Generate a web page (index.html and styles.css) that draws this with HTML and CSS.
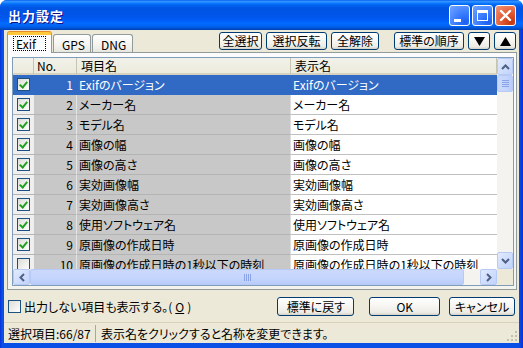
FILE: index.html
```html
<!DOCTYPE html>
<html>
    <head>
        <meta charset="utf-8">
        <link rel="stylesheet" href="styles.css">
    </head>
    <body>
        <div class="window">
            <div class="titlebar">
                <span class="title">出力設定</span>
                <div class="caption-buttons">
                    <span class="cap min"><i></i></span>
                    <span class="cap max"><i></i></span>
                    <span class="cap close">
                        <svg width="13" height="13" viewBox="0 0 13 13"><path d="M2 2 L11 11 M11 2 L2 11" stroke="#fff" stroke-width="2.4" stroke-linecap="round"/></svg>
                    </span>
                </div>
            </div>

            <div class="client">
                <div class="toprow">
                    <div class="tabs">
                        <span class="tab active"><span class="focus">Exif</span></span>
                        <span class="tab">GPS</span>
                        <span class="tab">DNG</span>
                    </div>
                    <div class="tools">
                        <button class="btn w43">全選択</button>
                        <button class="btn w61">選択反転</button>
                        <button class="btn w48">全解除</button>
                        <button class="btn w70 gap">標準の順序</button>
                        <button class="btn w22"><svg width="11" height="9" viewBox="0 0 11 9"><path d="M0 0 H11 L5.5 9 Z" fill="#000"/></svg></button>
                        <button class="btn w22"><svg width="11" height="9" viewBox="0 0 11 9"><path d="M0 9 H11 L5.5 0 Z" fill="#000"/></svg></button>
                    </div>
                </div>

                <div class="panel">
                    <div class="list">
                        <div class="list-main">
                            <div class="grid">
                                <div class="row head">
                                    <span class="c-check"></span>
                                    <span class="c-no">No.</span>
                                    <span class="c-item">項目名</span>
                                    <span class="c-name">表示名</span>
                                </div>
                                <div class="row selected">
                                    <span class="c-check"><i class="cb on"></i></span>
                                    <span class="c-no">1</span>
                                    <span class="c-item">Exifのバージョン</span>
                                    <span class="c-name">Exifのバージョン</span>
                                </div>
                                <div class="row">
                                    <span class="c-check"><i class="cb on"></i></span>
                                    <span class="c-no">2</span>
                                    <span class="c-item">メーカー名</span>
                                    <span class="c-name">メーカー名</span>
                                </div>
                                <div class="row">
                                    <span class="c-check"><i class="cb on"></i></span>
                                    <span class="c-no">3</span>
                                    <span class="c-item">モデル名</span>
                                    <span class="c-name">モデル名</span>
                                </div>
                                <div class="row">
                                    <span class="c-check"><i class="cb on"></i></span>
                                    <span class="c-no">4</span>
                                    <span class="c-item">画像の幅</span>
                                    <span class="c-name">画像の幅</span>
                                </div>
                                <div class="row">
                                    <span class="c-check"><i class="cb on"></i></span>
                                    <span class="c-no">5</span>
                                    <span class="c-item">画像の高さ</span>
                                    <span class="c-name">画像の高さ</span>
                                </div>
                                <div class="row">
                                    <span class="c-check"><i class="cb on"></i></span>
                                    <span class="c-no">6</span>
                                    <span class="c-item">実効画像幅</span>
                                    <span class="c-name">実効画像幅</span>
                                </div>
                                <div class="row">
                                    <span class="c-check"><i class="cb on"></i></span>
                                    <span class="c-no">7</span>
                                    <span class="c-item">実効画像高さ</span>
                                    <span class="c-name">実効画像高さ</span>
                                </div>
                                <div class="row">
                                    <span class="c-check"><i class="cb on"></i></span>
                                    <span class="c-no">8</span>
                                    <span class="c-item">使用ソフトウェア名</span>
                                    <span class="c-name">使用ソフトウェア名</span>
                                </div>
                                <div class="row">
                                    <span class="c-check"><i class="cb on"></i></span>
                                    <span class="c-no">9</span>
                                    <span class="c-item">原画像の作成日時</span>
                                    <span class="c-name">原画像の作成日時</span>
                                </div>
                                <div class="row">
                                    <span class="c-check"><i class="cb"></i></span>
                                    <span class="c-no">10</span>
                                    <span class="c-item">原画像の作成日時の1秒以下の時刻</span>
                                    <span class="c-name">原画像の作成日時の1秒以下の時刻</span>
                                </div>
                            </div>
                            <div class="vscroll">
                                <span class="sb-btn"><svg width="9" height="6" viewBox="0 0 9 6"><path d="M1 5 L4.5 1.5 L8 5" fill="none" stroke="#4d6185" stroke-width="2"/></svg></span>
                                <span class="sb-thumb v"><i></i><i></i><i></i><i></i></span>
                                <span class="sb-track"></span>
                                <span class="sb-btn"><svg width="9" height="6" viewBox="0 0 9 6"><path d="M1 1 L4.5 4.5 L8 1" fill="none" stroke="#4d6185" stroke-width="2"/></svg></span>
                            </div>
                        </div>
                        <div class="hscroll-row">
                            <div class="hscroll">
                                <span class="sb-btn"><svg width="6" height="9" viewBox="0 0 6 9"><path d="M5 1 L1.5 4.5 L5 8" fill="none" stroke="#4d6185" stroke-width="2"/></svg></span>
                                <span class="sb-thumb h"><i></i><i></i><i></i><i></i></span>
                                <span class="sb-track"></span>
                                <span class="sb-btn"><svg width="6" height="9" viewBox="0 0 6 9"><path d="M1 1 L4.5 4.5 L1 8" fill="none" stroke="#4d6185" stroke-width="2"/></svg></span>
                            </div>
                            <div class="corner"></div>
                        </div>
                    </div>
                </div>

                <div class="footer">
                    <label class="show-all"><i class="cb"></i>出力しない項目も表示する。(<u>O</u>)</label>
                    <button class="btn w77">標準に戻す</button>
                    <button class="btn w71 ok">OK</button>
                    <button class="btn w66">キャンセル</button>
                </div>

                <div class="status">
                    <span class="status-count">選択項目:66/87</span>
                    <span class="status-msg">表示名をクリックすると名称を変更できます。</span>
                    <svg class="grip" width="12" height="12" viewBox="0 0 12 12">
                        <rect x="9" y="1" width="2" height="2" fill="#c3bfaf"/>
                        <rect x="5" y="5" width="2" height="2" fill="#c3bfaf"/>
                        <rect x="9" y="5" width="2" height="2" fill="#c3bfaf"/>
                        <rect x="1" y="9" width="2" height="2" fill="#c3bfaf"/>
                        <rect x="5" y="9" width="2" height="2" fill="#c3bfaf"/>
                        <rect x="9" y="9" width="2" height="2" fill="#c3bfaf"/>
                    </svg>
                </div>
            </div>
        </div>
    </body>
</html>
```

FILE: styles.css
```css
/* BASE */
* {
    box-sizing: border-box;
}
body {
    margin: 0;
    font-family: "Noto Sans CJK JP", "Liberation Sans", sans-serif;
    font-size: 12px;
    font-feature-settings: "palt";
    color: #000;
}

/* WINDOW FRAME */
.window {
    width: 523px;
    height: 348px;
    display: flex;
    flex-flow: column;
    background: linear-gradient(to right, #0831d9, #0a4fe6 2px, #0a4fe6 519px, #0831d9);
    border-radius: 7px 7px 0 0;
    overflow: hidden;
}
.titlebar {
    height: 30px;
    flex: 0 0 30px;
    display: flex;
    align-items: center;
    justify-content: space-between;
    padding: 0 7px 0 8px;
    background: linear-gradient(to bottom, #0058ee 0%, #3593ff 4%, #288eff 7%, #127dff 10%, #036ffc 13%, #0262ee 18%, #0057e5 25%, #0054e3 30%, #0055eb 56%, #005bf5 66%, #026afe 78%, #0062ef 88%, #0052d6 94%, #0040ab 100%);
}
.title {
    color: #fff;
    font-weight: bold;
    font-size: 13px;
    letter-spacing: 1px;
    text-shadow: 1px 1px #0f1089;
    padding-top: 1px;
}
.caption-buttons {
    display: flex;
    gap: 2px;
    padding-top: 1px;
}
.cap {
    width: 21px;
    height: 21px;
    border: 1px solid #fff;
    border-radius: 3px;
    display: flex;
    align-items: center;
    justify-content: center;
    background: radial-gradient(circle at 80% 85%, #1b5ff0, #3c7fff 45%, #6a9eff 90%);
}
.cap.min i {
    width: 7px;
    height: 3px;
    background: #fff;
    margin-top: 9px;
    margin-right: 5px;
}
.cap.max i {
    width: 11px;
    height: 11px;
    border: 1px solid #fff;
    border-top-width: 3px;
}
.cap.close {
    background: radial-gradient(circle at 80% 85%, #c4360f, #e25b34 45%, #f08e6d 90%);
}

/* CLIENT */
.client {
    flex: 1;
    margin: 0 4px 5px;
    background: #ece9d8;
    display: flex;
    flex-flow: column;
}
.toprow {
    height: 22px;
    display: flex;
    justify-content: space-between;
    align-items: flex-start;
    padding: 2px 3px 0 3px;
}
.tabs {
    display: flex;
    align-items: flex-end;
    height: 20px;
    position: relative;
    z-index: 1;
}
.tab {
    height: 18px;
    padding: 1px 8px 0;
    border: 1px solid #919b9c;
    border-bottom: none;
    border-radius: 3px 3px 0 0;
    background: linear-gradient(#fefefe, #f4f3ee 60%, #e7e6de);
    line-height: 17px;
    margin-right: 1px;
}
.tab:nth-child(2) {
    width: 38px;
}
.tab:nth-child(3) {
    width: 41px;
}
.tab.active {
    width: 45px;
    height: 21px;
    background: #fcfcfe;
    border-top: 3px solid #ffc83c;
    box-shadow: 0 -1px 0 #e68b2c;
    padding: 1px 5px 0;
    margin-bottom: -1px;
}
.tab.active .focus {
    display: block;
    border: 1px dotted #000;
    line-height: 13px;
    padding: 0 2px 0 2px;
}
.tools {
    display: flex;
    gap: 4px;
}
.btn {
    height: 18px;
    font: inherit;
    font-feature-settings: "palt";
    border: 1px solid #003c74;
    border-radius: 3px;
    background: linear-gradient(#ffffff, #f6f5f1 50%, #ecebe5 85%, #d6d0c5);
    padding: 0;
    display: flex;
    align-items: center;
    justify-content: center;
    line-height: 14px;
}
.btn.gap {
    margin-left: 11px;
}
.w22 { width: 22px; }
.w43 { width: 43px; }
.w48 { width: 48px; }
.w61 { width: 61px; }
.w66 { width: 66px; }
.w70 { width: 70px; }
.w71 { width: 71px; }
.w77 { width: 77px; }

/* TAB PANEL + LIST */
.panel {
    margin: 0 2px 0 3px;
    height: 238px;
    border: 1px solid #919b9c;
    background: linear-gradient(#fcfcfe, #f4f3ee);
    padding: 4px 2px 3px 4px;
}
.list {
    height: 229px;
    border: 1px solid #7f9db9;
    background: #fff;
    display: flex;
    flex-flow: column;
}
.list-main {
    flex: 1;
    display: flex;
    overflow: hidden;
}
.grid {
    width: 484px;
    overflow: hidden;
}
.row {
    display: grid;
    grid-template-columns: 21px 43px 214px 206px;
    height: 20px;
    line-height: 19px;
    white-space: nowrap;
}
.row > span {
    border-bottom: 1px solid #b4b4b4;
    overflow: hidden;
}
.row .c-check {
    background: #efefef;
    display: flex;
    align-items: center;
    justify-content: center;
}
.row .c-no {
    background: #c8c8c8;
    text-align: right;
    padding-right: 3px;
    border-right: 1px solid #e4e4e4;
}
.row .c-item {
    background: #c8c8c8;
    padding-left: 2px;
    border-right: 1px solid #dcdcdc;
}
.row .c-name {
    padding-left: 2px;
    border-bottom-color: #c0c0c0;
}
.row.head {
    height: 17px;
    line-height: 15px;
}
.row.head > span {
    background: linear-gradient(#f3f2ea, #ebeadb);
    border-bottom: 2px solid #d6d2c2;
    border-right: 1px solid #c7c5b2;
    text-align: left;
    padding-left: 4px;
}
.row.head .c-no {
    padding-left: 3px;
}
.row.selected > span {
    background: #316ac5;
    color: #fff;
    border-right-color: #316ac5;
    border-bottom-color: #316ac5;
}
.cb {
    display: inline-block;
    width: 13px;
    height: 13px;
    border: 1px solid #1c5180;
    background: linear-gradient(135deg, #dcdcd7, #fff);
    position: relative;
}
.cb.on::after {
    content: "";
    position: absolute;
    left: 3px;
    top: 1px;
    width: 3px;
    height: 6px;
    border: solid #21a121;
    border-width: 0 2px 2px 0;
    transform: rotate(40deg);
}

/* SCROLLBARS */
.vscroll {
    width: 16px;
    display: flex;
    flex-flow: column;
    background: #f4f3ef;
}
.hscroll-row {
    display: flex;
    height: 16px;
}
.hscroll {
    flex: 1;
    display: flex;
    background: #f4f3ef;
}
.corner {
    width: 16px;
    background: #ece9d8;
}
.sb-btn {
    width: 16px;
    height: 17px;
    flex: 0 0 auto;
    border: 1px solid #b7caf5;
    border-radius: 2px;
    background: linear-gradient(135deg, #e1eafe, #c1d3fb);
    display: flex;
    align-items: center;
    justify-content: center;
}
.hscroll .sb-btn {
    height: 16px;
    width: 17px;
}
.sb-track {
    flex: 1;
}
.sb-thumb {
    border: 1px solid #b7caf5;
    border-radius: 2px;
    display: flex;
    align-items: center;
    justify-content: center;
    gap: 1px;
}
.sb-thumb.v {
    height: 17px;
    flex-flow: column;
    background: linear-gradient(to right, #cad8fb, #c6d6fc 50%, #b9ccfa);
}
.sb-thumb.v i {
    width: 7px;
    height: 1px;
    background: #8aa3e6;
}
.sb-thumb.h {
    width: 434px;
    background: linear-gradient(#cad8fb, #c6d6fc 50%, #b9ccfa);
}
.sb-thumb.h i {
    width: 1px;
    height: 7px;
    background: #8aa3e6;
}

/* FOOTER */
.footer {
    height: 32px;
    display: flex;
    align-items: center;
    padding: 1px 0 0 4px;
}
.footer .btn {
    height: 19px;
}
.show-all {
    display: flex;
    align-items: center;
    gap: 3px;
    width: 270px;
}
.footer .ok {
    margin-left: 15px;
}
.footer .btn + .btn {
    margin-right: 4px;
}
.footer .ok + .btn {
    margin-left: 5px;
}

/* STATUS BAR */
.status {
    flex: 1;
    display: flex;
    align-items: center;
    border-top: 1px solid #d8d2bd;
    padding-left: 4px;
    position: relative;
}
.status-count {
    width: 87px;
}
.status-msg {
    border-left: 1px solid #aca899;
    padding-left: 5px;
}
.grip {
    position: absolute;
    right: 1px;
    bottom: 1px;
}
```
